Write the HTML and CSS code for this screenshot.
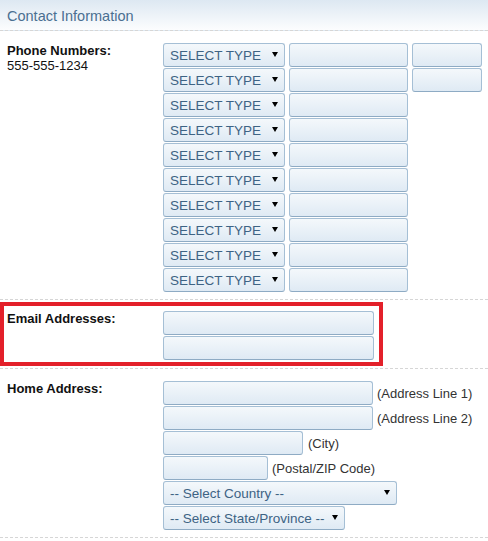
FILE: index.html
```html
<!DOCTYPE html>
<html lang="en">
<head>
  <meta charset="UTF-8" />
  <title>Contact Information</title>
  <link rel="stylesheet" href="styles.css">
</head>
<body>
  <header class="section-head">Contact Information</header>

  <div class="form-row">
    <div class="field-label">
      <strong>Phone Numbers:</strong><br>
      555-555-1234
    </div>
    <div class="field-controls">
      <div class="phone-line">
        <span class="select-wrap type-select"><select><option>SELECT TYPE</option></select></span>
        <input type="text" class="phone-num" />
        <input type="text" class="phone-ext" />
      </div>
      <div class="phone-line">
        <span class="select-wrap type-select"><select><option>SELECT TYPE</option></select></span>
        <input type="text" class="phone-num" />
        <input type="text" class="phone-ext" />
      </div>
      <div class="phone-line">
        <span class="select-wrap type-select"><select><option>SELECT TYPE</option></select></span>
        <input type="text" class="phone-num" />
      </div>
      <div class="phone-line">
        <span class="select-wrap type-select"><select><option>SELECT TYPE</option></select></span>
        <input type="text" class="phone-num" />
      </div>
      <div class="phone-line">
        <span class="select-wrap type-select"><select><option>SELECT TYPE</option></select></span>
        <input type="text" class="phone-num" />
      </div>
      <div class="phone-line">
        <span class="select-wrap type-select"><select><option>SELECT TYPE</option></select></span>
        <input type="text" class="phone-num" />
      </div>
      <div class="phone-line">
        <span class="select-wrap type-select"><select><option>SELECT TYPE</option></select></span>
        <input type="text" class="phone-num" />
      </div>
      <div class="phone-line">
        <span class="select-wrap type-select"><select><option>SELECT TYPE</option></select></span>
        <input type="text" class="phone-num" />
      </div>
      <div class="phone-line">
        <span class="select-wrap type-select"><select><option>SELECT TYPE</option></select></span>
        <input type="text" class="phone-num" />
      </div>
      <div class="phone-line">
        <span class="select-wrap type-select"><select><option>SELECT TYPE</option></select></span>
        <input type="text" class="phone-num" />
      </div>
    </div>
  </div>

  <div class="form-row email-row">
    <div class="highlight-box">
      <div class="field-label"><strong>Email Addresses:</strong></div>
      <div class="field-controls">
        <input type="text" class="email-input" />
        <input type="text" class="email-input" />
      </div>
    </div>
  </div>

  <div class="form-row">
    <div class="field-label"><strong>Home Address:</strong></div>
    <div class="field-controls">
      <div class="addr-line"><input type="text" class="addr-street" /><span class="hint">(Address Line 1)</span></div>
      <div class="addr-line"><input type="text" class="addr-street" /><span class="hint">(Address Line 2)</span></div>
      <div class="addr-line"><input type="text" class="addr-city" /><span class="hint hint-wide">(City)</span></div>
      <div class="addr-line"><input type="text" class="addr-zip" /><span class="hint">(Postal/ZIP Code)</span></div>
      <div class="addr-line">
        <span class="select-wrap country-select"><select><option>-- Select Country --</option></select></span>
      </div>
      <div class="addr-line">
        <span class="select-wrap state-select"><select><option>-- Select State/Province --</option></select></span>
      </div>
    </div>
  </div>
</body>
</html>
```

FILE: styles.css
```css
body {
  margin: 0;
  font-family: "Liberation Sans", Arial, sans-serif;
  font-size: 13px;
  line-height: 15px;
  color: #222;
  background-color: #fff;
}

.section-head {
  height: 31px;
  box-sizing: border-box;
  padding: 8px 7px 0;
  font-size: 14.5px;
  line-height: 16px;
  color: #4a6f91;
  background: linear-gradient(#dde8f2, #fcfdfe);
  border-bottom: 1px dashed #d6d6d6;
}

.form-row {
  display: flex;
  padding: 12px 0 6px 7px;
  border-bottom: 1px dashed #d6d6d6;
}

.field-label {
  width: 156px;
  flex-shrink: 0;
  color: #111;
}

.field-controls {
  display: flex;
  flex-direction: column;
}

/* controls */
input,
select {
  box-sizing: border-box;
  height: 24px;
  margin: 0 0 1px;
  padding: 0 6px;
  font-family: inherit;
  font-size: 13.5px;
  color: #3d6384;
  border: 1px solid #a5bfd5;
  border-bottom-color: #8eabc4;
  border-radius: 3px;
  background: linear-gradient(#f4f8fb, #dfeaf4);
  outline: none;
}

select {
  -webkit-appearance: none;
  appearance: none;
  width: 100%;
  padding-right: 18px;
}

.select-wrap {
  position: relative;
  display: block;
}

.select-wrap::after {
  content: "";
  position: absolute;
  top: 9px;
  right: 7px;
  border-left: 3px solid transparent;
  border-right: 3px solid transparent;
  border-top: 5px solid #000;
  pointer-events: none;
}

.phone-line {
  display: flex;
  gap: 4px;
}

.type-select { width: 122px; }
.phone-num { width: 119px; }
.phone-ext { width: 70px; }

/* email */
.email-row {
  padding: 2px 0 2px 0;
}

.highlight-box {
  display: flex;
  width: 383px;
  box-sizing: border-box;
  padding: 5px 0 1px 3px;
  border: 4px solid #e3202a;
}

.email-input { width: 211px; }

/* address */
.addr-line {
  display: flex;
  align-items: center;
}

.addr-line .hint {
  margin: 0 0 1px 4px;
  color: #333;
}

.addr-line .hint-wide { margin-left: 5px; }

.addr-street { width: 210px; }
.addr-city { width: 140px; }
.addr-zip { width: 105px; }
.country-select { width: 234px; }
.state-select { width: 182px; }
```
